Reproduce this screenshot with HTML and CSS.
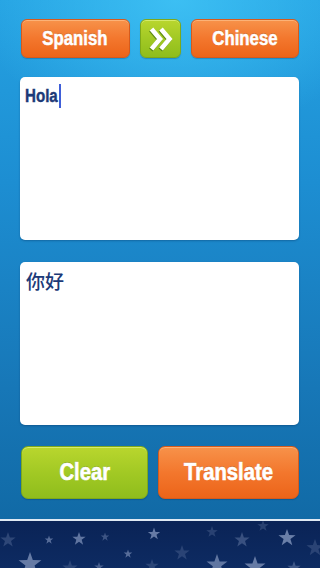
FILE: index.html
```html
<!DOCTYPE html>
<html>
<head>
<meta charset="utf-8">
<link rel="stylesheet" href="styles.css">
</head>
<body>
<div class="app">
  <div class="main">
    <div class="lang-row">
      <div class="btn orange lang"><span class="cond">Spanish</span></div>
      <div class="btn green swap">
        <svg width="26" height="26" viewBox="0 0 26 26">
          <g fill="none" stroke-width="4.6" stroke-linejoin="miter" stroke-miterlimit="6">
            <g stroke="#5d8a12" transform="translate(-0.7,1)">
              <polyline points="3.5,3 12,13 3.5,23"/>
              <polyline points="13,3 21.5,13 13,23"/>
            </g>
            <g stroke="#fff">
              <polyline points="3.5,3 12,13 3.5,23"/>
              <polyline points="13,3 21.5,13 13,23"/>
            </g>
          </g>
        </svg>
      </div>
      <div class="btn orange lang"><span class="cond">Chinese</span></div>
    </div>
    <div class="box"><span class="src">Hola</span><span class="caret"></span></div>
    <div class="box"><span class="dst">你好</span></div>
    <div class="action-row">
      <div class="btn green big clear"><span class="cond">Clear</span></div>
      <div class="btn orange big translate"><span class="cond">Translate</span></div>
    </div>
  </div>
  <div class="footer">
    <svg width="320" height="47" viewBox="0 0 320 47">
      <defs>
        <polygon id="st" points="0,-1 0.235,-0.324 0.951,-0.309 0.38,0.124 0.588,0.809 0,0.4 -0.588,0.809 -0.38,0.124 -0.951,-0.309 -0.235,-0.324"/>
      </defs>
      <g fill="#7084ad">
        <use href="#st" transform="translate(8 19) scale(8)" opacity="0.35"/>
        <use href="#st" transform="translate(49 19) scale(4.5)" opacity="0.75"/>
        <use href="#st" transform="translate(79 18) scale(7)" opacity="0.85"/>
        <use href="#st" transform="translate(105 16) scale(4.5)" opacity="0.5"/>
        <use href="#st" transform="translate(154 13) scale(6.5)" opacity="0.9"/>
        <use href="#st" transform="translate(128 33) scale(4.5)" opacity="0.75"/>
        <use href="#st" transform="translate(30 43) scale(12)" opacity="0.9"/>
        <use href="#st" transform="translate(99 46) scale(5)" opacity="0.6"/>
        <use href="#st" transform="translate(182 32) scale(8)" opacity="0.3"/>
        <use href="#st" transform="translate(152 45) scale(7)" opacity="0.3"/>
        <use href="#st" transform="translate(212 11) scale(6)" opacity="0.3"/>
        <use href="#st" transform="translate(217 44) scale(11)" opacity="0.85"/>
        <use href="#st" transform="translate(242 19) scale(8)" opacity="0.45"/>
        <use href="#st" transform="translate(255 46) scale(11)" opacity="0.9"/>
        <use href="#st" transform="translate(263 5) scale(6)" opacity="0.3"/>
        <use href="#st" transform="translate(287 17) scale(9)" opacity="0.95"/>
        <use href="#st" transform="translate(315 27) scale(9)" opacity="0.3"/>
        <use href="#st" transform="translate(294 47) scale(7)" opacity="0.5"/>
        <use href="#st" transform="translate(70 47) scale(8)" opacity="0.3"/>
      </g>
    </svg>
  </div>
</div>
</body>
</html>
```
FILE: styles.css
```css
html, body {
  margin: 0;
  padding: 0;
}
body {
  width: 320px;
  height: 568px;
  overflow: hidden;
  font-family: "Liberation Sans", Arial, sans-serif;
}
.app {
  width: 320px;
  height: 568px;
  display: flex;
  flex-direction: column;
}
.main {
  flex: 1;
  background:
    radial-gradient(ellipse 200px 140px at 55% 0%, rgba(64,196,246,0.85) 0%, rgba(64,196,246,0) 100%),
    linear-gradient(180deg, #25a2e2 0%, #1d8ed2 35%, #1777b7 75%, #116aa6 100%);
  padding: 19px 21px 20px 20px;
  display: flex;
  flex-direction: column;
  border-bottom: 2px solid #dfe9f3;
}
.lang-row {
  display: flex;
  gap: 10px;
  height: 39px;
  margin-left: 1px;
}
.btn {
  box-sizing: border-box;
  border-radius: 6px;
  color: #fff;
  font-weight: bold;
  display: flex;
  align-items: center;
  justify-content: center;
  text-shadow: 0 -1px 0 rgba(0,0,0,0.18);
}
.cond {
  display: inline-block;
  transform: scaleX(0.86);
  -webkit-text-stroke: 0.5px #fff;
  white-space: nowrap;
}
.orange {
  background: linear-gradient(180deg, #f7924a 0%, #f3772d 50%, #ec6419 100%);
  border: 1px solid #d65a1c;
  box-shadow: inset 0 1px 0 rgba(255,200,150,0.6), 0 1px 1px rgba(0,40,80,0.25);
}
.green {
  background: linear-gradient(180deg, #b9d62e 0%, #a2c924 50%, #8fbd1c 100%);
  border: 1px solid #7ea81a;
  box-shadow: inset 0 1px 0 rgba(230,250,150,0.6), 0 1px 1px rgba(0,40,80,0.25);
}
.lang {
  flex: 1;
  font-size: 19.5px;
}
.swap {
  width: 41px;
  flex: none;
}
.swap svg {
  display: block;
  margin-left: 1px;
}
.box {
  background: #fff;
  border-radius: 5px;
  height: 163px;
  box-sizing: border-box;
  padding: 7px 5px;
  box-shadow: 0 1px 2px rgba(0,30,70,0.3);
  display: flex;
  align-items: flex-start;
}
.lang-row + .box {
  margin-top: 19px;
}
.box + .box {
  margin-top: 22px;
}
.src {
  display: inline-block;
  font-size: 18px;
  font-weight: bold;
  color: #1c3a78;
  line-height: 24px;
  -webkit-text-stroke: 0.4px #1c3a78;
  transform: scaleX(0.84);
  transform-origin: left center;
  margin-right: -6px;
}
.caret {
  display: inline-block;
  width: 2px;
  height: 24px;
  background: #3f5fd8;
  margin-left: 1px;
}
.dst {
  font-family: "Noto Sans CJK SC", sans-serif;
  font-size: 19px;
  font-weight: 500;
  color: #1c3a78;
  line-height: 24px;
  padding-left: 1px;
}
.action-row {
  margin-top: 21px;
  margin-left: 1px;
  display: flex;
  gap: 10px;
  height: 53px;
}
.big {
  font-size: 23px;
  border-radius: 7px;
}
.big .cond {
  transform: scaleX(0.88);
  -webkit-text-stroke: 0.6px #fff;
}
.clear {
  width: 127px;
}
.translate {
  flex: 1;
}
.footer {
  height: 47px;
  background: linear-gradient(180deg, #0a2356 0%, #0d2b62 100%);
}
.footer svg {
  display: block;
}
```
